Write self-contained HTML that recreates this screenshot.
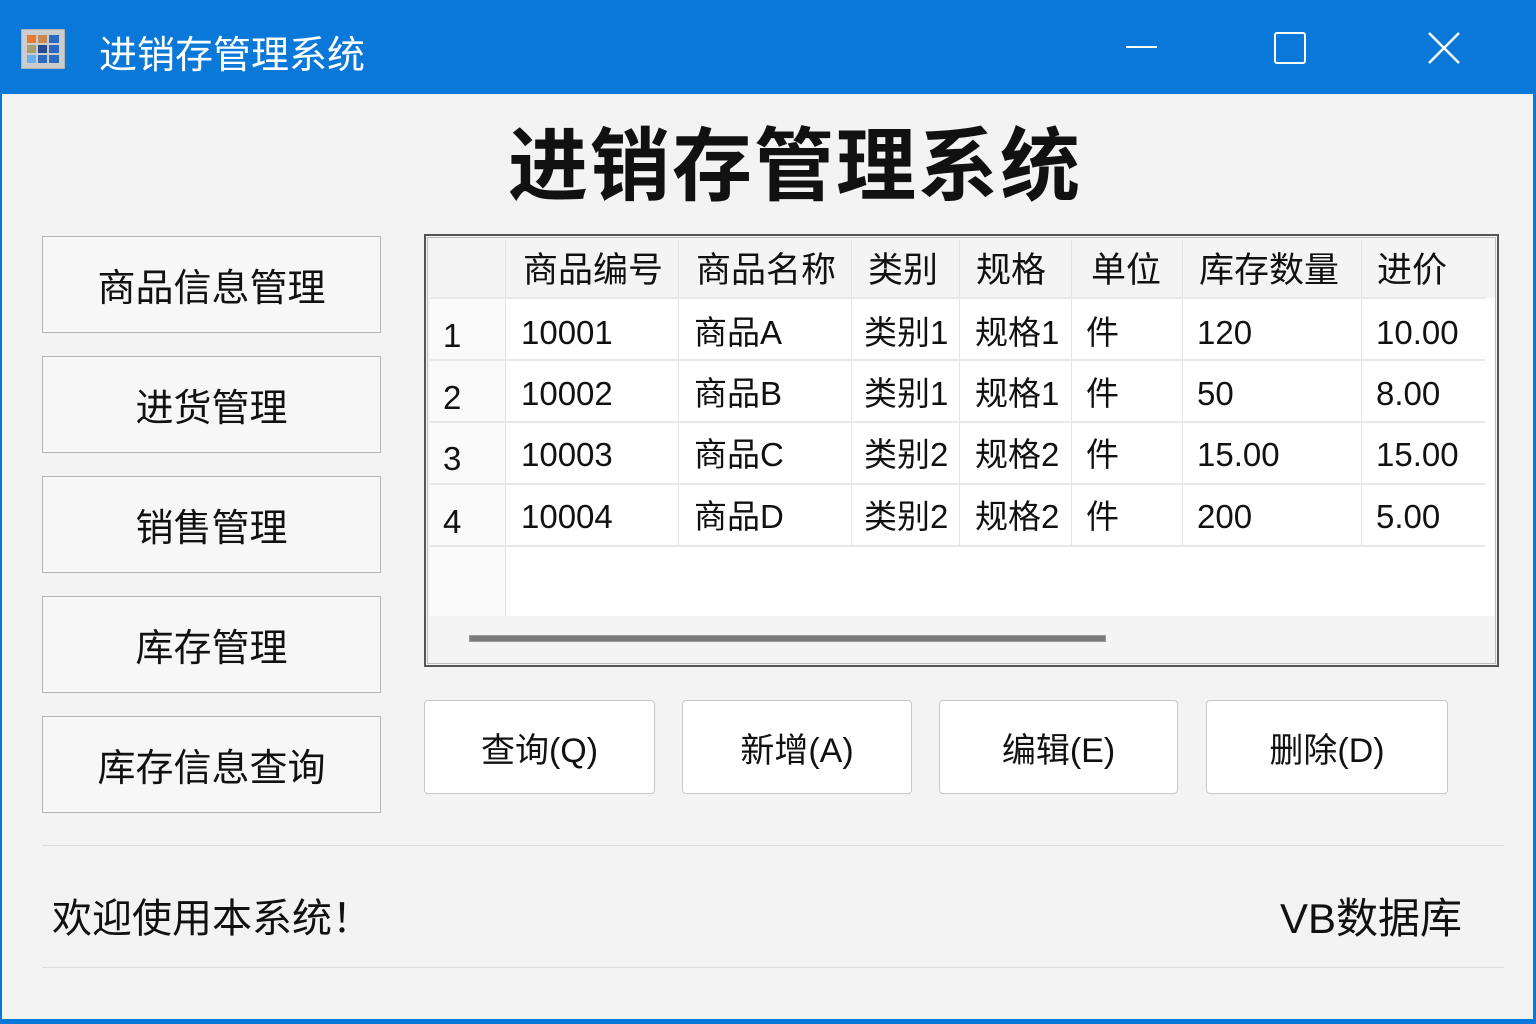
<!DOCTYPE html>
<html><head><meta charset="utf-8"><style>
*{margin:0;padding:0;box-sizing:border-box}
body{width:1536px;height:1024px;background:#f3f3f3;font-family:"Liberation Sans","Noto Sans CJK SC",sans-serif;position:relative;overflow:hidden;color:#111}
.a{position:absolute}
.tb{left:0;top:0;width:1536px;height:94px;background:#0a78d8}
.btn{position:absolute;background:#f7f7f7;border:1.5px solid #b4b4b4;display:flex;align-items:center;justify-content:center;font-size:38px}
.ab{background:#fff;border:1.5px solid #c8c8c8;border-radius:4px;font-size:34px}
.grid{left:424px;top:234px;width:1075px;height:433px;border:2px solid #555;background:#f4f4f4;outline:1px solid #bbb;outline-offset:-4px}
.cell{position:absolute;font-size:33px;line-height:62px;white-space:nowrap}
.hd{font-size:35px}
.vl{position:absolute;width:1px;background:#e4e4e4}
.hl{position:absolute;height:2px;background:#e8e8e8;left:430px;width:1055px}
</style></head><body>
<div class="a tb"></div>
<div class="a" style="left:0;bottom:0;width:1536px;height:5px;background:#0a78d8"></div>
<div class="a" style="right:0;top:0;width:3px;height:1024px;background:#0a78d8"></div>
<div class="a" style="left:0;top:0;width:2px;height:1024px;background:#0a78d8"></div>
<svg class="a" style="left:21px;top:29px" width="44" height="40"><rect x="0" y="0" width="44" height="40" fill="#ccc" stroke="#999"/><rect x="6" y="6" width="9" height="8" fill="#e87a30"/><rect x="17" y="6" width="9" height="8" fill="#c88a50"/><rect x="28" y="6" width="10" height="8" fill="#2a6ac0"/><rect x="6" y="16" width="9" height="8" fill="#a8a070"/><rect x="17" y="16" width="9" height="8" fill="#284a90"/><rect x="28" y="16" width="10" height="8" fill="#2a6ac0"/><rect x="6" y="26" width="9" height="8" fill="#6ab0f0"/><rect x="17" y="26" width="9" height="8" fill="#2a6ac0"/><rect x="28" y="26" width="10" height="8" fill="#2a6ac0"/></svg>
<div class="a" style="left:99px;top:24px;font-size:38px;color:#fff">进销存管理系统</div>
<div class="a" style="left:1126px;top:46px;width:31px;height:2px;background:#fff"></div>
<div class="a" style="left:1274px;top:32px;width:32px;height:32px;border:2.5px solid #fff;border-radius:3px"></div>
<svg class="a" style="left:1427px;top:31px" width="34" height="34"><path d="M2 2L32 32M32 2L2 32" stroke="#fff" stroke-width="2.5"/></svg>
<div class="a" style="left:0;top:102px;width:1590px;text-align:center;font-size:80px;font-weight:bold;letter-spacing:2px">进销存管理系统</div>

<div class="btn" style="left:42px;top:236px;width:339px;height:97px">商品信息管理</div>
<div class="btn" style="left:42px;top:356px;width:339px;height:97px">进货管理</div>
<div class="btn" style="left:42px;top:476px;width:339px;height:97px">销售管理</div>
<div class="btn" style="left:42px;top:596px;width:339px;height:97px">库存管理</div>
<div class="btn" style="left:42px;top:716px;width:339px;height:97px">库存信息查询</div>

<div class="a grid"></div>
<div class="a" style="left:430px;top:298px;width:1065px;height:318px;background:#fff"></div>
<div class="a" style="left:430px;top:298px;width:75px;height:318px;background:#fafafa"></div>
<div class="vl" style="left:505px;top:240px;height:376px"></div>
<div class="vl" style="left:678px;top:240px;height:306px"></div>
<div class="vl" style="left:851px;top:240px;height:306px"></div>
<div class="vl" style="left:959px;top:240px;height:306px"></div>
<div class="vl" style="left:1071px;top:240px;height:306px"></div>
<div class="vl" style="left:1182px;top:240px;height:306px"></div>
<div class="vl" style="left:1361px;top:240px;height:306px"></div>
<div class="hl" style="top:297px"></div><div class="hl" style="top:359px"></div><div class="hl" style="top:421px"></div><div class="hl" style="top:483px"></div><div class="hl" style="top:545px"></div>
<div class="cell hd" style="left:523px;top:240px">商品编号</div>
<div class="cell hd" style="left:696px;top:240px">商品名称</div>
<div class="cell hd" style="left:868px;top:240px">类别</div>
<div class="cell hd" style="left:976px;top:240px">规格</div>
<div class="cell hd" style="left:1091px;top:240px">单位</div>
<div class="cell hd" style="left:1199px;top:240px">库存数量</div>
<div class="cell hd" style="left:1377px;top:240px">进价</div>

<div class="cell" style="left:443px;top:305px">1</div><div class="cell" style="left:521px;top:302px">10001</div><div class="cell" style="left:694px;top:302px">商品A</div><div class="cell" style="left:864px;top:302px">类别1</div><div class="cell" style="left:975px;top:302px">规格1</div><div class="cell" style="left:1086px;top:302px">件</div><div class="cell" style="left:1197px;top:302px">120</div><div class="cell" style="left:1376px;top:302px">10.00</div>
<div class="cell" style="left:443px;top:367px">2</div><div class="cell" style="left:521px;top:363px">10002</div><div class="cell" style="left:694px;top:363px">商品B</div><div class="cell" style="left:864px;top:363px">类别1</div><div class="cell" style="left:975px;top:363px">规格1</div><div class="cell" style="left:1086px;top:363px">件</div><div class="cell" style="left:1197px;top:363px">50</div><div class="cell" style="left:1376px;top:363px">8.00</div>
<div class="cell" style="left:443px;top:428px">3</div><div class="cell" style="left:521px;top:424px">10003</div><div class="cell" style="left:694px;top:424px">商品C</div><div class="cell" style="left:864px;top:424px">类别2</div><div class="cell" style="left:975px;top:424px">规格2</div><div class="cell" style="left:1086px;top:424px">件</div><div class="cell" style="left:1197px;top:424px">15.00</div><div class="cell" style="left:1376px;top:424px">15.00</div>
<div class="cell" style="left:443px;top:491px">4</div><div class="cell" style="left:521px;top:486px">10004</div><div class="cell" style="left:694px;top:486px">商品D</div><div class="cell" style="left:864px;top:486px">类别2</div><div class="cell" style="left:975px;top:486px">规格2</div><div class="cell" style="left:1086px;top:486px">件</div><div class="cell" style="left:1197px;top:486px">200</div><div class="cell" style="left:1376px;top:486px">5.00</div>
<div class="a" style="left:469px;top:635px;width:637px;height:7px;background:#7a7a7a;border:1px solid #999"></div>

<div class="btn ab" style="left:424px;top:700px;width:231px;height:94px">查询(Q)</div>
<div class="btn ab" style="left:682px;top:700px;width:230px;height:94px">新增(A)</div>
<div class="btn ab" style="left:939px;top:700px;width:239px;height:94px">编辑(E)</div>
<div class="btn ab" style="left:1206px;top:700px;width:242px;height:94px">删除(D)</div>

<div class="a" style="left:42px;top:845px;width:1462px;height:1px;background:#ddd"></div>
<div class="a" style="left:42px;top:967px;width:1462px;height:1px;background:#ddd"></div>
<div class="a" style="left:52px;top:886px;font-size:40px">欢迎使用本系统！</div>
<div class="a" style="left:1280px;top:885px;font-size:42px">VB数据库</div>
</body></html>
